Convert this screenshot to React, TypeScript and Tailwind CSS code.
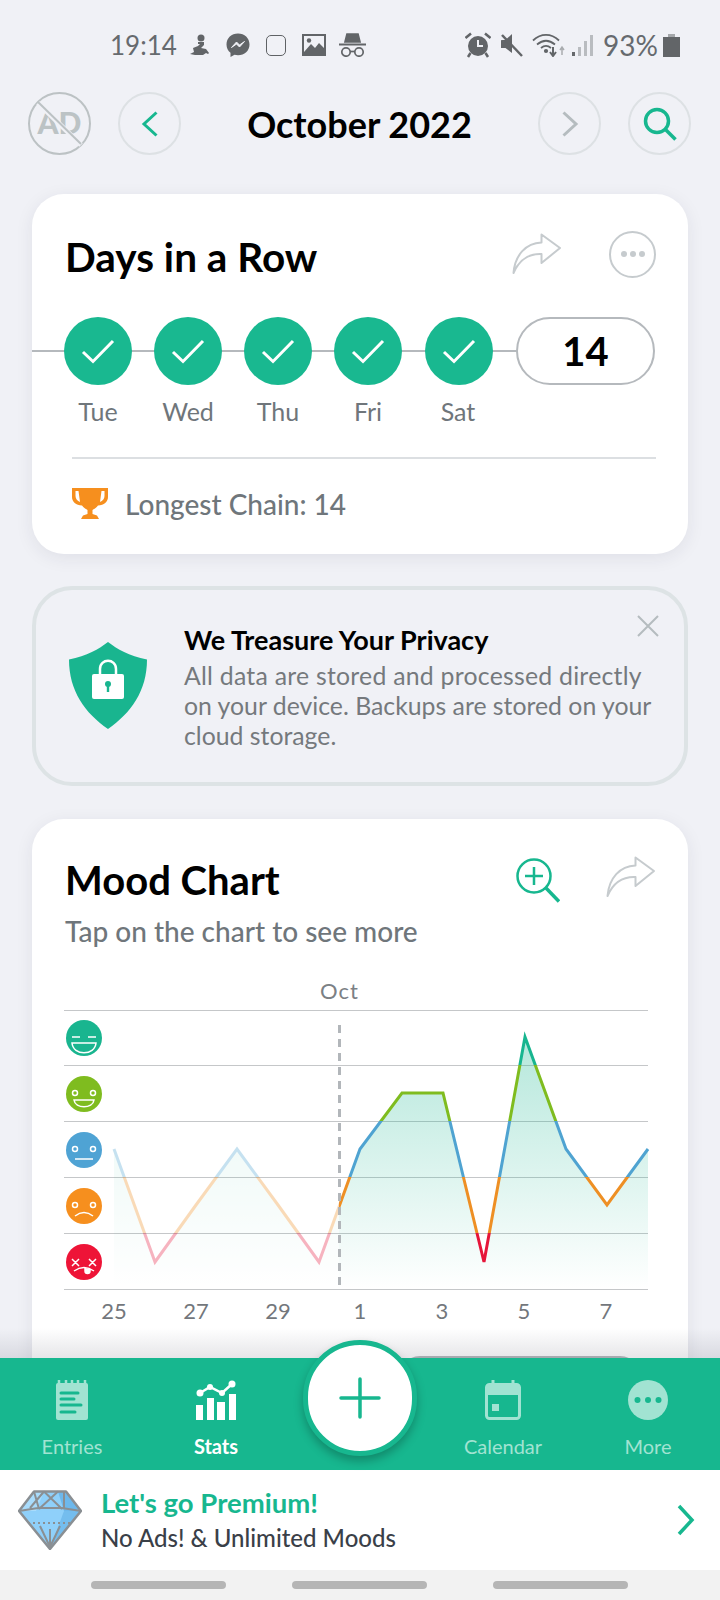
import React from "react";

const TEAL = "#17b78f";
const LIGHT = "#a1e3d2";

function Share() {
  return (
    <svg width="50" height="42" viewBox="0 0 50 42" fill="none" stroke="#c6cbce" strokeWidth="2" strokeLinejoin="round">
      <path d="M1.5 40C3 22 14 10 29.500 9.500L29.500 1.500L48 15L29.500 30L29.500 21C17 20.500 7 27 1.500 40Z" />
    </svg>
  );
}

function Check() {
  return (
    <div className="w-[68px] h-[68px] rounded-full bg-[#19b890] flex items-center justify-center shrink-0">
      <svg width="36" height="26" viewBox="0 0 36 26" fill="none" stroke="#ffffff" strokeWidth="3">
        <path d="M3 14L13 23.500L33 3" />
      </svg>
    </div>
  );
}

function Face({ cy, color, kind }: { cy: number; color: string; kind: number }) {
  const cx = 84;
  return (
    <g>
      <circle cx={cx} cy={cy} r="18" fill={color} />
      {kind === 5 && (
        <g stroke="#fff" strokeWidth="1.500" fill="none">
          <path d={`M${cx - 12} ${cy - 1}h8M${cx + 4} ${cy - 1}h8`} />
          <path d={`M${cx - 12} ${cy + 5}H${cx + 12}C${cx + 11} ${cy + 18} ${cx - 11} ${cy + 18} ${cx - 12} ${cy + 5}Z`} />
        </g>
      )}
      {kind === 4 && (
        <g stroke="#fff" strokeWidth="1.500" fill="none">
          <circle cx={cx - 9} cy={cy - 1} r="2.500" />
          <circle cx={cx + 9} cy={cy - 1} r="2.500" />
          <path d={`M${cx - 10} ${cy + 6}H${cx + 10}C${cx + 9} ${cy + 15} ${cx - 9} ${cy + 15} ${cx - 10} ${cy + 6}Z`} />
        </g>
      )}
      {kind === 3 && (
        <g stroke="#fff" strokeWidth="1.500" fill="none">
          <circle cx={cx - 9} cy={cy - 1} r="2.500" />
          <circle cx={cx + 9} cy={cy - 1} r="2.500" />
          <path d={`M${cx - 9} ${cy + 9}H${cx + 9}`} />
        </g>
      )}
      {kind === 2 && (
        <g stroke="#fff" strokeWidth="1.500" fill="none">
          <circle cx={cx - 9} cy={cy - 1} r="2.500" />
          <circle cx={cx + 9} cy={cy - 1} r="2.500" />
          <path d={`M${cx - 9} ${cy + 10}Q${cx} ${cy + 3} ${cx + 9} ${cy + 10}`} />
        </g>
      )}
      {kind === 1 && (
        <g stroke="#fff" strokeWidth="1.500" fill="none">
          <path d={`M${cx - 12} ${cy - 3}l7 7m0 -7l-7 7M${cx + 5} ${cy - 3}l7 7m0 -7l-7 7`} />
          <path d={`M${cx - 10} ${cy + 9}Q${cx} ${cy + 2} ${cx + 10} ${cy + 9}`} />
          <path d={`M${cx + 1} ${cy + 6}v3a2.500 2.500 0 0 0 5 0v-2`} fill="#fff" />
        </g>
      )}
    </g>
  );
}

const XS = [114, 155, 196, 237, 278, 319, 360, 402, 443, 484, 525, 566, 607, 648];
const YS = [1149, 1262, 1205, 1149, 1205, 1262, 1149, 1093, 1093, 1262, 1037, 1149, 1205, 1149];
const LINE = XS.map((x, i) => `${x},${YS[i]}`).join(" ");
const AREA = `M114 1289L${LINE.replace(/ /g, "L")}L648 1289Z`;

function Chart() {
  return (
    <svg width="590" height="292" viewBox="64 1005 590 292" className="block">
      <defs>
        <linearGradient id="moodLine" gradientUnits="userSpaceOnUse" x1="0" y1="1010" x2="0" y2="1289">
          <stop offset="0.197" stopColor="#17b58f" />
          <stop offset="0.197" stopColor="#7fbc1f" />
          <stop offset="0.398" stopColor="#7fbc1f" />
          <stop offset="0.398" stopColor="#4fa3d1" />
          <stop offset="0.599" stopColor="#4fa3d1" />
          <stop offset="0.599" stopColor="#ee8f24" />
          <stop offset="0.799" stopColor="#ee8f24" />
          <stop offset="0.799" stopColor="#e6153a" />
        </linearGradient>
        <linearGradient id="moodFill" gradientUnits="userSpaceOnUse" x1="0" y1="1037" x2="0" y2="1289">
          <stop offset="0" stopColor="#17b58f" stopOpacity="0.32" />
          <stop offset="1" stopColor="#17b58f" stopOpacity="0" />
        </linearGradient>
        <clipPath id="pastClip"><rect x="64" y="1005" width="275" height="292" /></clipPath>
        <clipPath id="nowClip"><rect x="339" y="1005" width="320" height="292" /></clipPath>
      </defs>
      {[1010, 1065, 1121, 1177, 1233, 1289].map((y) => (
        <path key={y} d={`M64 ${y + 0.5}H648`} stroke="#c5c7c9" strokeWidth="1" />
      ))}
      <g clipPath="url(#pastClip)" opacity="0.32">
        <path d={AREA} fill="url(#moodFill)" />
        <polyline points={LINE} fill="none" stroke="url(#moodLine)" strokeWidth="3" />
      </g>
      <g clipPath="url(#nowClip)">
        <path d={AREA} fill="url(#moodFill)" />
        <polyline points={LINE} fill="none" stroke="url(#moodLine)" strokeWidth="3" />
      </g>
      <path d="M339.500 1025V1286" stroke="#b2b6ba" strokeWidth="3" strokeDasharray="8 6" />
      <Face cy={1038} color="#19b58f" kind={5} />
      <Face cy={1094} color="#7fbc1f" kind={4} />
      <Face cy={1150} color="#4fa3d4" kind={3} />
      <Face cy={1206} color="#f68f1e" kind={2} />
      <Face cy={1262} color="#ee1437" kind={1} />
    </svg>
  );
}

function NavItem({ label, active, children }: { label: string; active?: boolean; children: React.ReactNode }) {
  return (
    <div className={`w-[100px] flex flex-col items-center ${active ? "text-white font-bold" : "text-[#a1e3d2]"}`}>
      <div className="h-[40px] flex items-center justify-center">{children}</div>
      <div className="mt-[13px] h-[26px] text-[20px] leading-[26px]">{label}</div>
    </div>
  );
}

export default function App() {
  return (
    <div className="w-[720px] h-[1600px] flex flex-col bg-[#f0f1f6] overflow-hidden relative text-[#6f767b]" style={{ fontFamily: "Lato, 'Noto Sans', sans-serif" }}>
      <div className="relative flex-1 min-h-0 overflow-hidden">
        {/* Status bar */}
        <div className="h-[92px] flex items-start pt-[28px] pl-[110px] text-[#666a6e]">
          <div className="w-[66px] text-[26px] leading-[34px] whitespace-nowrap">19:14</div>
          <div className="ml-[14px] flex items-center h-[34px]">
            <svg width="20" height="23" viewBox="0 0 20 23" fill="#626568">
              <circle cx="11" cy="4" r="3.500" />
              <path d="M8 8h6v3l-3 3 5 1 3 4-1 1 -2-1-3 2H5l-5-1 4-2-1-4 5-2 2-2H8Z" />
            </svg>
            <svg width="24" height="25" viewBox="0 0 24 25" className="ml-[16px]">
              <path d="M12 0.500C5.500 0.500 0.500 5 0.500 11.500C0.500 15 2 17.800 4.500 19.800V24L8.500 21.800C9.500 22 10.800 22.300 12 22.300C18.500 22.300 23.500 17.800 23.500 11.500C23.500 5 18.500 0.500 12 0.500Z" fill="#626568" />
              <path d="M5.500 14.500L10.500 9L13.500 12L18.500 8.500L13.500 14L10.500 11Z" fill="#f0f1f6" stroke="#f0f1f6" />
            </svg>
            <div className="ml-[16px] w-[20px] h-[21px] rounded-[5px] border border-[#5f6265]" />
            <svg width="24" height="22" viewBox="0 0 24 22" className="ml-[16px]">
              <rect width="24" height="22" fill="#626568" />
              <rect x="2" y="2" width="20" height="18" fill="#f0f1f6" />
              <circle cx="7" cy="6.500" r="2.200" fill="#626568" />
              <path d="M2 18L9 10L13 14L17 9L22 14V20H2Z" fill="#626568" />
            </svg>
            <svg width="27" height="24" viewBox="0 0 27 24" className="ml-[13px]" fill="none" stroke="#626568" strokeWidth="1.700">
              <path d="M6 9L8 1H19L21 9Z" fill="#626568" />
              <path d="M0 11.500H27" strokeWidth="2" />
              <circle cx="7" cy="19" r="4.200" />
              <circle cx="20" cy="19" r="4.200" />
              <path d="M11 18.500H16" />
            </svg>
          </div>
          <div className="ml-[99px] flex items-center h-[34px]">
            <svg width="26" height="26" viewBox="0 0 26 26" fill="#626568">
              <circle cx="13" cy="14" r="10" />
              <path d="M0.500 6L6 1.500M25.500 6L20 1.500M5.500 21L3 25M20.500 21L23 25" stroke="#626568" strokeWidth="2.500" />
              <path d="M13 8V14H18" stroke="#f0f1f6" strokeWidth="2" fill="none" />
            </svg>
            <svg width="22" height="24" viewBox="0 0 22 24" className="ml-[10px]" fill="#626568">
              <path d="M0 7H4.500L11 1V15Z" />
              <path d="M0 7V15H4.500L11 20V12Z" />
              <path d="M1 2L21 23" stroke="#626568" strokeWidth="2.500" />
            </svg>
            <svg width="33" height="24" viewBox="0 0 33 24" className="ml-[9px]" fill="none" stroke="#626568" strokeWidth="1.800">
              <path d="M1 7.500C9 0 19 0 27 7.500M5 11.500C11 6.500 17 6.500 23 11.500M9 15C12 12.500 16 12.500 19 15" />
              <circle cx="14" cy="18" r="1.200" fill="#626568" />
              <path d="M21 14V22M18 19L21 23L24 19" strokeWidth="2" />
              <path d="M30 22V15M28 17L30 14L32 17" stroke="#a9acaf" strokeWidth="1.500" />
            </svg>
            <svg width="22" height="23" viewBox="0 0 22 23" className="ml-[7px]" fill="#b9bcc0">
              <rect x="0" y="18" width="3" height="4" fill="#66696c" />
              <rect x="6" y="13" width="3" height="9" />
              <rect x="12" y="7" width="3" height="15" />
              <rect x="18" y="1" width="3" height="21" />
            </svg>
            <div className="ml-[9px] w-[54px] text-[28px] leading-[34px] whitespace-nowrap">93%</div>
            <svg width="17" height="23" viewBox="0 0 17 23" className="ml-[6px]" fill="#626568">
              <rect x="5" y="0" width="7" height="3" fill="#a5a8ab" />
              <rect x="0" y="3" width="17" height="20" />
            </svg>
          </div>
        </div>

        {/* Header */}
        <div className="h-[63px] flex items-center pl-[28px] pr-[29px]">
          <div className="w-[63px] h-[63px]">
            <svg width="63" height="63" viewBox="0 0 63 63">
              <circle cx="31.500" cy="31.500" r="30.500" fill="none" stroke="#bcc2c4" strokeWidth="2" />
              <text x="31.500" y="42" textAnchor="middle" fontSize="30" fontWeight="900" fill="#bcc3c5" fontFamily="Lato, sans-serif">AD</text>
              <path d="M10 11L53 53" stroke="#f0f1f6" strokeWidth="5" />
              <path d="M10 10L53 52" stroke="#bcc2c4" strokeWidth="2" />
            </svg>
          </div>
          <div className="ml-[27px] w-[63px] h-[63px] rounded-full border-2 border-[#dde1e4] flex items-center justify-center">
            <svg width="18" height="26" viewBox="0 0 18 26" fill="none" stroke={TEAL} strokeWidth="3"><path d="M15.500 1.500L3 13L15.500 24.500" /></svg>
          </div>
          <div className="flex-1 text-center text-[36px] leading-[44px] font-bold text-black">October 2022</div>
          <div className="w-[63px] h-[63px] rounded-full border-2 border-[#dde1e4] flex items-center justify-center">
            <svg width="18" height="26" viewBox="0 0 18 26" fill="none" stroke="#b5bcbf" strokeWidth="3"><path d="M2.500 1.500L15 13L2.500 24.500" /></svg>
          </div>
          <div className="ml-[27px] w-[63px] h-[63px] rounded-full border-2 border-[#dde1e4] flex items-center justify-center">
            <svg width="34" height="34" viewBox="0 0 34 34" fill="none" stroke={TEAL} strokeWidth="3.500">
              <circle cx="14" cy="14" r="11.500" />
              <path d="M22 22L32.500 32.500" />
            </svg>
          </div>
        </div>

        {/* Days in a Row */}
        <div className="mx-[32px] mt-[39px] h-[360px] bg-white rounded-[32px] shadow-[0_4px_18px_rgba(40,40,70,0.08)] relative overflow-hidden">
          <div className="h-[46px] mt-[37px] pl-[33px] pr-[32px] flex items-center">
            <div className="flex-1 mt-[6px] text-[40.500px] leading-[46px] font-bold text-black">Days in a Row</div>
            <Share />
            <div className="ml-[47px] w-[47px] h-[47px] rounded-full border-2 border-[#c6cbce] flex items-center justify-center gap-[3px]">
              <div className="w-[6px] h-[6px] rounded-full bg-[#c6cbce]" />
              <div className="w-[6px] h-[6px] rounded-full bg-[#c6cbce]" />
              <div className="w-[6px] h-[6px] rounded-full bg-[#c6cbce]" />
            </div>
          </div>
          <div className="relative mt-[40px] h-[68px] pl-[32px] flex">
            <div className="absolute left-0 top-[33px] w-[486px] h-[2px] bg-[#b5b9bd]" />
            <div className="relative flex gap-[22px]">
              <Check /><Check /><Check /><Check />
              <div className="ml-[1px]"><Check /></div>
            </div>
            <div className="relative ml-[23px] w-[139px] h-[68px] rounded-full border-2 border-[#b5b9bd] bg-white flex items-center justify-center text-[40px] font-bold text-black">14</div>
          </div>
          <div className="mt-[12px] pl-[32px] flex gap-[22px] text-[25px] leading-[28px]">
            {["Tue", "Wed", "Thu", "Fri", "Sat"].map((d) => (
              <div key={d} className="w-[68px] text-center">{d}</div>
            ))}
          </div>
          <div className="mt-[32px] ml-[40px] mr-[32px] h-[2px] bg-[#dcdfe2]" />
          <div className="mt-[27px] ml-[40px] flex items-center h-[36px]">
            <svg width="36" height="32" viewBox="0 0 36 32" fill="#f68f1e">
              <path d="M0 0H36V9C36 14 32 17 26 17.500C24.500 20 22 21 20.500 22V26L25 27.500L27 31H9L11 27.500L15.500 26V22C14 21 11.500 20 10 17.500C4 17 0 14 0 9ZM3.500 3V8C3.500 11 5.500 13 8 14L6.500 3ZM32.500 3H29.500L28 14C30.500 13 32.500 11 32.500 8Z" />
            </svg>
            <div className="ml-[17px] text-[28px] leading-[36px] font-medium">Longest Chain: 14</div>
          </div>
        </div>

        {/* Privacy */}
        <div className="mx-[32px] mt-[32px] h-[200px] rounded-[40px] border-4 border-[#dde3e5] relative flex items-center">
          <svg width="78" height="88" viewBox="0 0 78 88" className="ml-[33px] mt-[-3px] shrink-0">
            <path d="M39 1C48 8 60 15 78 18.500C78 50 62 72 39 88C16 72 0 50 0 18.500C18 15 30 8 39 1Z" fill="#19b58f" />
            <path d="M31 34V28C31 17 47 17 47 28V34" fill="none" stroke="#fff" strokeWidth="2.500" />
            <rect x="23" y="33" width="32" height="25" rx="2" fill="#fff" />
            <circle cx="39" cy="43" r="3" fill="#19b58f" />
            <rect x="37.800" y="43" width="2.400" height="8" fill="#19b58f" />
          </svg>
          <div className="ml-[37px] mt-[6px]">
            <div className="text-[27px] leading-[36px] mt-[-5px] font-bold text-black">We Treasure Your Privacy</div>
            <div className="text-[24.800px] leading-[30px] text-[#75797d] whitespace-nowrap mt-[3px]">
              <div className="tracking-[0.25px]">All data are stored and processed directly</div>
              <div>on your device. Backups are stored on your</div>
              <div>cloud storage.</div>
            </div>
          </div>
          <svg width="22" height="22" viewBox="0 0 22 22" className="absolute right-[25px] top-[25px]" fill="none" stroke="#b5bcbf" strokeWidth="2"><path d="M1 1L21 21M21 1L1 21" /></svg>
        </div>

        {/* Mood chart */}
        <div className="mx-[32px] mt-[33px] h-[580px] bg-white rounded-[32px] shadow-[0_4px_18px_rgba(40,40,70,0.08)]">
          <div className="pt-[36px] pl-[33px] pr-[32px] flex items-start h-[94px]">
            <div className="flex-1 text-[40px] leading-[50px] font-bold text-black">Mood Chart</div>
            <svg width="44" height="45" viewBox="0 0 44 45" fill="none" stroke={TEAL} strokeWidth="2.500" className="mt-[3px] mr-[-4px]">
              <circle cx="18" cy="18" r="16.500" />
              <path d="M18 9V27M9 18H27" />
              <path d="M30 30L43 43.500" strokeWidth="3.500" />
            </svg>
            <div className="ml-[50px] mt-[1px]"><Share /></div>
          </div>
          <div className="pl-[33px] text-[28px] leading-[36px] font-medium">Tap on the chart to see more</div>
          <div className="mt-[27px] ml-[33px] w-[590px] pl-[255px] text-[22px] leading-[29px] text-[#7b8085]">
            <span className="tracking-[1px]">Oct</span>
          </div>
          <div className="ml-[32px]"><Chart /></div>
          <div className="ml-[41px] flex text-[22px] leading-[28px] text-[#73777c]">
            {["25", "27", "29", "1", "3", "5", "7"].map((d) => (
              <div key={d} className="w-[82px] text-center">{d}</div>
            ))}
          </div>
          <div className="mt-[31px] ml-[368px] w-[240px] h-[40px] rounded-[20px] border-2 border-[#b5b9bd]" />
        </div>

        <div className="absolute left-0 right-0 bottom-0 h-[30px] bg-gradient-to-b from-transparent to-[rgba(60,60,80,0.13)]" />
      </div>

      {/* Navigation */}
      <div className="relative h-[112px] bg-[#17b78f] flex items-start pt-[22px]">
        <div className="ml-[22px]">
          <NavItem label="Entries">
            <svg width="32" height="40" viewBox="0 0 32 40">
              <rect x="0" y="3" width="32" height="37" rx="2" fill={LIGHT} />
              <path d="M3 0V5M10 0V5M16 0V5M22 0V5M29 0V5" stroke={LIGHT} strokeWidth="2.500" />
              <path d="M5 13H22M5 19H18M5 25H25M5 32H19" stroke={TEAL} strokeWidth="3" strokeLinecap="round" />
            </svg>
          </NavItem>
        </div>
        <div className="ml-[44px]">
          <NavItem label="Stats" active>
            <svg width="40" height="40" viewBox="0 0 40 40" fill="#fff">
              <rect x="0" y="25" width="7" height="15" />
              <rect x="11" y="18" width="7" height="22" />
              <rect x="21" y="22" width="8" height="18" />
              <rect x="33" y="14" width="7" height="26" />
              <path d="M4 13L14 7L26 13L36 4" fill="none" stroke="#fff" strokeWidth="2.500" />
              <circle cx="4" cy="13" r="3.500" /><circle cx="14" cy="7" r="3" /><circle cx="26" cy="13" r="3" /><circle cx="36" cy="4" r="3.500" />
            </svg>
          </NavItem>
        </div>
        <div className="ml-[187px]">
          <NavItem label="Calendar">
            <svg width="36" height="40" viewBox="0 0 36 40" fill="none">
              <path d="M8 0V5M28 0V5" stroke={LIGHT} strokeWidth="3" />
              <rect x="1.500" y="4.500" width="33" height="34" rx="3" stroke={LIGHT} strokeWidth="3" />
              <rect x="2" y="5" width="32" height="10" fill={LIGHT} />
              <rect x="7" y="24" width="7" height="7" fill={LIGHT} />
            </svg>
          </NavItem>
        </div>
        <div className="ml-[45px]">
          <NavItem label="More">
            <svg width="40" height="40" viewBox="0 0 40 40">
              <circle cx="20" cy="20" r="20" fill={LIGHT} />
              <circle cx="9.500" cy="20" r="3" fill={TEAL} /><circle cx="20" cy="20" r="3" fill={TEAL} /><circle cx="30.500" cy="20" r="3" fill={TEAL} />
            </svg>
          </NavItem>
        </div>
        <div className="absolute left-[303px] top-[-18px] w-[114px] h-[116px] rounded-full bg-white border-[5px] border-[#17b78f] shadow-[0_5px_10px_rgba(0,0,0,0.25)] flex items-center justify-center">
          <svg width="42" height="42" viewBox="0 0 42 42" stroke={TEAL} strokeWidth="3.500" strokeLinecap="round"><path d="M21 2V40M2 21H40" /></svg>
        </div>
      </div>

      {/* Premium */}
      <div className="h-[100px] bg-white flex items-center">
        <svg width="64" height="60" viewBox="0 0 64 60" className="ml-[18px] shrink-0" fill="none" stroke="#8a8f93" strokeWidth="2" strokeLinejoin="round">
          <path d="M16 1.500H48L63 21L32 59L1 21Z" fill="#8fd0fa" stroke="none" />
          <path d="M16 1.500L1 21H18L26 1.500Z" fill="#a9dcfc" stroke="none" />
          <path d="M40 1.500H48L63 21H46Z" fill="#6db8ec" stroke="none" />
          <path d="M46 21H63L32 59Z" fill="#74bdee" stroke="none" />
          <path d="M16 1.500H48L63 21L32 59L1 21Z" strokeWidth="2.500" />
          <path d="M16 1.500L21 19M26 1.500L12 18M26 1.500L44 19M40 1.500L21 19M46 1.500V19M1 21L20 18H44L63 21" />
          <path d="M10 33H54" strokeDasharray="2 3" />
          <path d="M22 36L32 57L42 36M32 39V57" />
        </svg>
        <div className="ml-[19px] flex-1">
          <div className="text-[27.500px] leading-[36px] font-bold text-[#17b78f]">Let's go Premium!</div>
          <div className="text-[24px] leading-[34px] text-[#3a4048] font-medium">No Ads! &amp; Unlimited Moods</div>
        </div>
        <svg width="20" height="32" viewBox="0 0 20 32" fill="none" stroke={TEAL} strokeWidth="3.500" className="mr-[24px]"><path d="M3 2L16 16L3 30" /></svg>
      </div>

      {/* System nav */}
      <div className="h-[30px] bg-[#f2f2f2] flex items-start pt-[11px] pl-[91px] gap-[66px]">
        <div className="w-[135px] h-[8px] rounded-full bg-[#b5b5b5]" />
        <div className="w-[135px] h-[8px] rounded-full bg-[#b5b5b5]" />
        <div className="w-[135px] h-[8px] rounded-full bg-[#b5b5b5]" />
      </div>
    </div>
  );
}
